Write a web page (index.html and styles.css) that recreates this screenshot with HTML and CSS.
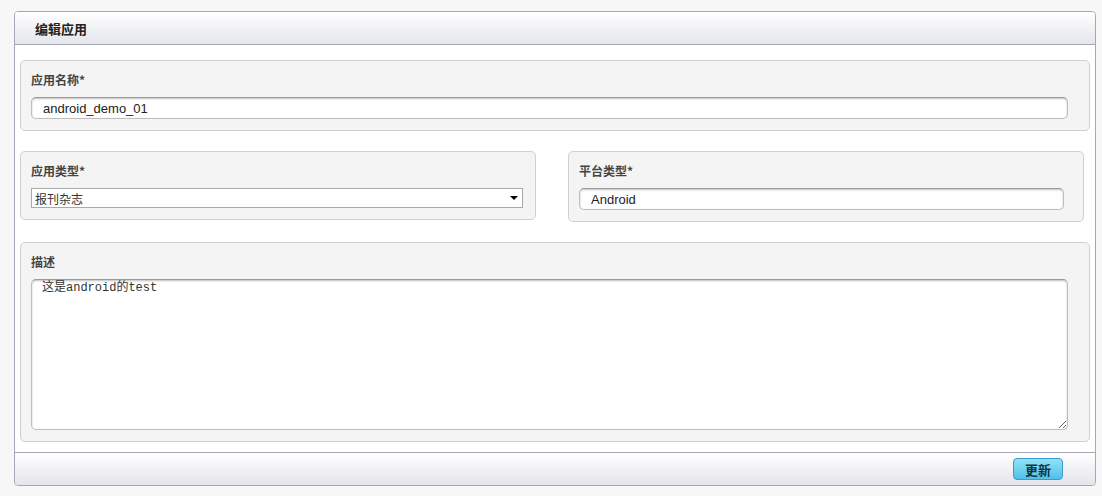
FILE: index.html
```html
<!DOCTYPE html>
<html lang="zh-CN">
<head>
    <meta charset="UTF-8">
    <title>编辑应用</title>
    <link rel="stylesheet" href="styles.css">
</head>
<body>
    <div class="panel">
        <div class="panel-header">
            <h2>编辑应用</h2>
        </div>

        <div class="panel-body">
            <div class="field-box">
                <label class="field-label">应用名称*</label>
                <input class="text-input wide" type="text" value="android_demo_01">
            </div>

            <div class="field-row">
                <div class="field-box half">
                    <label class="field-label">应用类型*</label>
                    <div class="select-wrap">
                        <select class="select-input">
                            <option>报刊杂志</option>
                        </select>
                        <span class="select-arrow"></span>
                    </div>
                </div>
                <div class="field-box half">
                    <label class="field-label">平台类型*</label>
                    <input class="text-input platform" type="text" value="Android">
                </div>
            </div>

            <div class="field-box">
                <label class="field-label">描述</label>
                <textarea class="text-area">这是android的test</textarea>
            </div>
        </div>

        <div class="panel-footer">
            <button class="update-button">更新</button>
        </div>
    </div>
</body>
</html>
```

FILE: styles.css
```css
body {
    margin: 0;
    padding: 11px 6px 10px 14px;
    background-color: #f7f7f7;
    font-family: 'Liberation Sans', Arial, 'Noto Sans CJK SC', sans-serif;
    font-size: 12px;
    color: #333;
}

.panel {
    border: 1px solid #a3a7b7;
    border-radius: 4px;
    background-color: #fff;
    overflow: hidden;
}

.panel-header {
    height: 32px;
    border-bottom: 1px solid #a3a7b7;
    background: linear-gradient(to bottom, #ffffff 0%, #e5e6ec 100%);
    display: flex;
    align-items: center;
    padding-left: 20px;
}

.panel-header h2 {
    margin: 0;
    font-family: 'Noto Sans CJK SC', sans-serif;
    font-size: 13px;
    font-weight: bold;
    color: #222;
}

.panel-body {
    padding: 15px 5px 10px 5px;
}

.field-box {
    background-color: #f4f4f4;
    border: 1px solid #cfcfcf;
    border-radius: 5px;
    padding: 10px 21px 11px 10px;
    margin-bottom: 20px;
}

.field-box:last-child {
    margin-bottom: 0;
}

.field-row {
    display: flex;
    align-items: flex-start;
    gap: 32px;
    margin-bottom: 20px;
}

.field-box.half {
    width: 516px;
    box-sizing: border-box;
    padding-right: 12px;
    margin-bottom: 0;
}

.field-row .field-box.half:last-child {
    padding-right: 19px;
}

.field-label {
    display: block;
    font-family: 'Noto Sans CJK SC', sans-serif;
    font-size: 12px;
    font-weight: bold;
    color: #444;
    line-height: 18px;
    margin-bottom: 8px;
}

.text-input {
    display: block;
    width: 100%;
    box-sizing: border-box;
    height: 22px;
    border: 1px solid #bdbdbd;
    border-top-color: #9a9a9a;
    border-radius: 5px;
    box-shadow: inset 0 1px 2px rgba(0, 0, 0, 0.25);
    padding: 0 11px;
    font-family: 'Liberation Sans', Arial, sans-serif;
    font-size: 13px;
    color: #222;
    background-color: #fff;
}

.select-wrap {
    position: relative;
}

.select-input {
    display: block;
    width: 100%;
    box-sizing: border-box;
    height: 20px;
    -webkit-appearance: none;
    appearance: none;
    border: 1px solid #a9a9a9;
    border-radius: 0;
    background-color: #fff;
    padding: 0 3px;
    font-family: 'Noto Sans CJK SC', sans-serif;
    font-size: 12px;
    color: #333;
}

.select-arrow {
    position: absolute;
    right: 5px;
    top: 8px;
    width: 0;
    height: 0;
    border-left: 4px solid transparent;
    border-right: 4px solid transparent;
    border-top: 4px solid #000;
}

.text-area {
    display: block;
    width: 100%;
    box-sizing: border-box;
    height: 151px;
    border: 1px solid #bdbdbd;
    border-top-color: #9a9a9a;
    border-radius: 5px;
    box-shadow: inset 0 1px 2px rgba(0, 0, 0, 0.25);
    padding: 1px 10px;
    line-height: 15px;
    font-family: 'Liberation Mono', 'Noto Sans CJK SC', monospace;
    font-size: 12px;
    color: #333;
    background-color: #fff;
}

.panel-footer {
    height: 32px;
    border-top: 1px solid #a3a7b7;
    background: linear-gradient(to bottom, #ffffff 0%, #e4e5eb 100%);
    display: flex;
    justify-content: flex-end;
    align-items: flex-start;
    padding-right: 32px;
}

.update-button {
    margin-top: 5px;
    width: 50px;
    height: 22px;
    border: 1px solid #3b9ccb;
    border-radius: 4px;
    background: linear-gradient(to bottom, #8fe3f7 0%, #52c0ea 100%);
    font-family: 'Noto Sans CJK SC', sans-serif;
    font-size: 13px;
    font-weight: bold;
    color: #16323f;
    padding: 0;
    cursor: pointer;
}
```
